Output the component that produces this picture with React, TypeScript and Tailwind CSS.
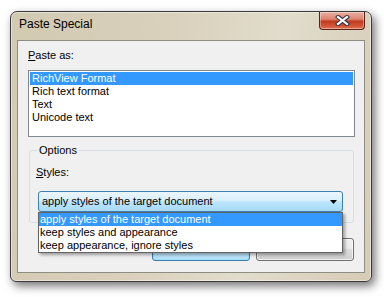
import React from 'react';

const pasteFormats = ['RichView Format', 'Rich text format', 'Text', 'Unicode text'];
const styleOptions = [
  'apply styles of the target document',
  'keep styles and appearance',
  'keep appearance, ignore styles',
];

function CloseButton() {
  return (
    <div className="w-[46px] h-[18px] rounded-b-[4px] border border-t-0 border-[#5a2418] bg-[linear-gradient(#eab0a2_0%,#dc8470_42%,#c23a1e_55%,#d4583a_85%,#e07a58_100%)] shadow-[inset_0_0_0_1px_rgba(255,255,255,0.35)] flex items-center justify-center">
      <svg width="15" height="11" viewBox="0 0 15 11">
        <path d="M3 2 L12 9 M12 2 L3 9" stroke="#2e3440" strokeWidth="4.2" strokeLinecap="square" />
        <path d="M3 2 L12 9 M12 2 L3 9" stroke="#ffffff" strokeWidth="2.2" strokeLinecap="square" />
      </svg>
    </div>
  );
}

function DropArrow() {
  return (
    <svg width="8" height="4" viewBox="0 0 8 4">
      <path d="M0 0 H7 L3.5 4 Z" fill="#000" />
    </svg>
  );
}

export default function App() {
  return (
    <div className="w-[384px] h-[297px] bg-white overflow-hidden pt-[11px] pl-[10px] font-['Liberation_Sans',Arial,sans-serif] text-[11px] leading-[13px] text-black">
      {/* Window frame */}
      <div className="w-[362px] h-[271px] rounded-t-[7px] rounded-b-[6px] border border-[#3a3a3a] bg-[linear-gradient(100deg,#d2c9b1_0%,#d9d1bc_40%,#e2dccc_68%,#d5ccb5_100%)] shadow-[inset_0_0_0_1px_rgba(255,255,255,0.45),3px_4px_10px_rgba(0,0,0,0.55)] flex flex-col px-[6px] pb-[8px]">
        {/* Title bar */}
        <div className="h-[28px] flex items-start justify-between">
          <div className="pt-[5px] pl-[2px] text-[12px] leading-[15px] text-black">Paste Special</div>
          <CloseButton />
        </div>

        {/* Client area */}
        <div className="flex-1 border border-[#8f8c84] bg-[#f0f0f0] pl-[10px] pt-[8px] flex flex-col">
          <div className="h-[13px]">
            <span className="underline">P</span>aste as:
          </div>

          <div className="mt-[8px] w-[327px] h-[67px] border border-[#828790] bg-white p-px">
            {pasteFormats.map((f, i) => (
              <div
                key={f}
                className={`h-[13px] pl-[2px] ${i === 0 ? 'bg-[#3399ff] text-white' : 'text-black'}`}
              >
                {f}
              </div>
            ))}
          </div>

          {/* Options group */}
          <div className="relative mt-[13px] ml-px w-[325px] h-[73px] border border-[#d5dfe5] rounded-[3px] pl-[6px] pt-[15px]">
            <div className="absolute -top-[7px] left-[7px] px-[2px] bg-[#f0f0f0]">Options</div>
            <div className="h-[13px]">
              <span className="underline">S</span>tyles:
            </div>

            <div className="relative mt-[12px] ml-[2px] w-[305px] h-[21px]">
              <div className="h-full border border-[#3c7fb1] rounded-[3px] bg-[linear-gradient(#eaf6fd_0%,#d9f0fc_45%,#bee6fd_50%,#a7d9f5_100%)] flex items-center justify-between pl-[3px] pr-[4px]">
                <span>{styleOptions[0]}</span>
                <DropArrow />
              </div>

              {/* Open drop-down list */}
              <div className="absolute top-full left-0 z-10 w-[305px] h-[41px] border border-[#646464] bg-white shadow-[2px_2px_3px_rgba(0,0,0,0.35)]">
                {styleOptions.map((o, i) => (
                  <div
                    key={o}
                    className={`h-[13px] pl-[1px] ${i === 0 ? 'bg-[#3399ff] text-white' : 'text-black'}`}
                  >
                    {o}
                  </div>
                ))}
              </div>
            </div>
          </div>

          {/* Buttons */}
          <div className="mt-[15px] pr-[10px] flex justify-end gap-[6px]">
            <button className="w-[98px] h-[23px] rounded-[3px] border border-[#3c7fb1] bg-[linear-gradient(#ecf7fd_0%,#dcf1fc_45%,#c4e8fb_50%,#b3e0f9_100%)] shadow-[inset_0_0_0_1px_#9fe0fa]">
              OK
            </button>
            <button className="w-[98px] h-[23px] rounded-[3px] border border-[#707070] bg-[linear-gradient(#f2f2f2_0%,#ebebeb_45%,#dddddd_50%,#cfcfcf_100%)] shadow-[inset_0_0_0_1px_rgba(255,255,255,0.7)]">
              Cancel
            </button>
          </div>
        </div>
      </div>
    </div>
  );
}
